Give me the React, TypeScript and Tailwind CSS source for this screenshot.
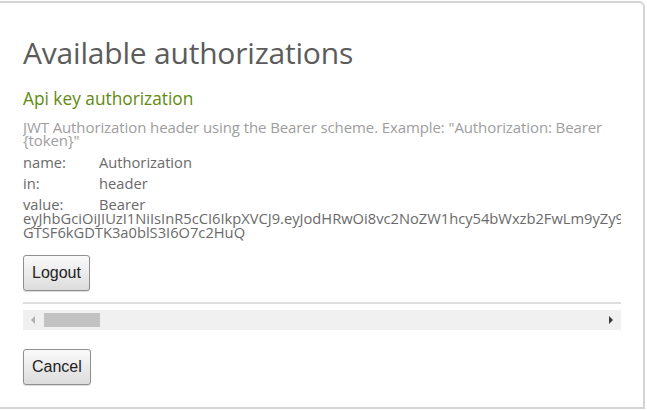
import React from "react";

const token =
  "eyJhbGciOiJIUzI1NiIsInR5cCI6IkpXVCJ9.eyJodHRwOi8vc2NoZW1hcy54bWxzb2FwLm9yZy93cy8yMDA1LzA1L2lkZW50aXR5L2NsYWltcy9uYW1lIjoiYWRtaW4iLCJleHAiOjE1NjA1MDYwMzAsImlzcyI6Imh0dHA6Ly9sb2NhbGhvc3QiLCJhdWQiOiJodHRwOi8vbG9jYWxob3N0In0.Xq8vQ2rW0pL9-GTSF6kGDTK3a0blS3I6O7c2HuQ";

const rows: [string, string][] = [
  ["name:", "Authorization"],
  ["in:", "header"],
];

function Button({ label }: { label: string }) {
  return (
    <button className="h-[36px] px-[8px] rounded-[3px] border border-[#8f8f8f] bg-gradient-to-b from-[#fafafa] to-[#dcdcdc] text-[16px] text-[#222] font-['Liberation_Sans',Arial,sans-serif] shadow-[0_1px_1px_rgba(0,0,0,0.15)]">
      {label}
    </button>
  );
}

export default function App() {
  return (
    <div className="w-[647px] h-[410px] bg-white overflow-hidden font-['Open_Sans',sans-serif]">
      <div className="w-[645px] h-[408px] mt-[1px] border-t-2 border-r-2 border-b-2 border-[#d4d4d4] rounded-tr-[6px] px-[23px] pt-[30px]">
        <h2 className="text-[30px] leading-[40px] text-[#5c5c5c] tracking-[-0.2px]">
          Available authorizations
        </h2>

        <div className="mt-[14px] w-[598px]">
          <h3 className="text-[17.3px] leading-[24px] text-[#5f8a12]">
            Api key authorization
          </h3>

          <div className="overflow-hidden">
            <p className="mt-[10px] text-[15px] leading-[13px] text-[#9e9e9e] tracking-[-0.1px]">
              JWT Authorization header using the Bearer scheme. Example: "Authorization: Bearer {"{token}"}"
            </p>

            <div className="mt-[8px] text-[14.7px] leading-[14px] text-[#6a6a6a]">
              {rows.map(([k, v]) => (
                <div key={k} className="mb-[7px]">
                  <span className="inline-block w-[76px]">{k}</span>
                  {v}
                </div>
              ))}
              <div>
                <span className="inline-block w-[76px]">value:</span>
                Bearer {token}
              </div>
            </div>

            <div className="mt-[16px] flex">
              <Button label="Logout" />
            </div>

            <div className="mt-[11px] h-[2px] bg-[#dedede]" />
          </div>

          <div className="mt-[6px] h-[20px] bg-[#f0f0f0] flex items-center">
            <svg width="6" height="8" viewBox="0 0 6 8" className="ml-[7px]">
              <path d="M5 0 L1 4 L5 8 Z" fill="#b0b0b0" />
            </svg>
            <div className="ml-[8px] w-[56px] h-[14px] bg-[#c2c2c2]" />
            <svg width="6" height="8" viewBox="0 0 6 8" className="ml-auto mr-[7px]">
              <path d="M1 0 L5 4 L1 8 Z" fill="#3a3a3a" />
            </svg>
          </div>
        </div>

        <div className="mt-[19px] flex">
          <Button label="Cancel" />
        </div>
      </div>
    </div>
  );
}
